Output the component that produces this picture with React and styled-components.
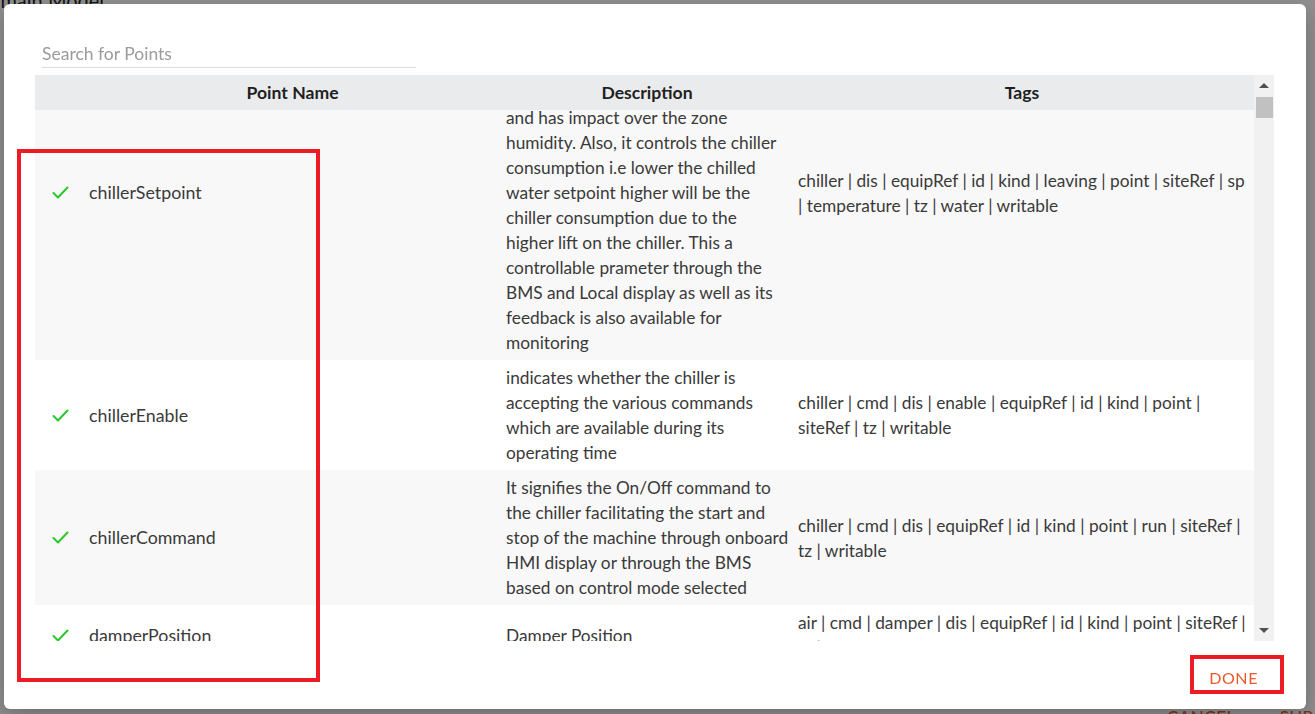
import React, { useLayoutEffect, useRef } from 'react';
import styled, { createGlobalStyle } from 'styled-components';

const GlobalStyle = createGlobalStyle`
  html, body {
    margin: 0;
    height: 100%;
    overflow: hidden;
  }
  body {
    font-family: Lato, 'Open Sans', sans-serif;
    background: #fff;
    color: #333;
  }
`;

const points = [
  {
    name: 'chillerSetpoint',
    description:
      'It is the leaving chilled water temperature setpoint which decides the supply air temperature\nand has impact over the zone humidity. Also, it controls the chiller consumption i.e lower the chilled water setpoint higher will be the chiller consumption due to the higher lift on the chiller. This a controllable prameter through the BMS and Local display as well as its feedback is also available for monitoring',
    tags: 'chiller | dis | equipRef | id | kind | leaving | point | siteRef | sp | temperature | tz | water | writable',
  },
  {
    name: 'chillerEnable',
    description:
      'indicates whether the chiller is accepting the various commands which are available during its operating time',
    tags: 'chiller | cmd | dis | enable | equipRef | id | kind | point | siteRef | tz | writable',
  },
  {
    name: 'chillerCommand',
    description:
      'It signifies the On/Off command to the chiller facilitating the start and stop of the machine through onboard HMI display or through the BMS based on control mode selected',
    tags: 'chiller | cmd | dis | equipRef | id | kind | point | run | siteRef | tz | writable',
  },
  {
    name: 'damperPosition',
    description: 'Damper Position',
    tags: 'air | cmd | damper | dis | equipRef | id | kind | point | siteRef | tz | writable',
  },
  {
    name: 'supplyAirTemp',
    description: 'Supply Air Temperature',
    tags: 'air | discharge | dis | equipRef | id | kind | point | sensor | siteRef | temp | tz',
  },
];

const COLUMNS = '46px 423px 286px 1fr';

// page sitting under the dialog
const Page = styled.div`
  height: 100vh;
  display: flex;
  flex-direction: column;
  justify-content: space-between;
`;

const PageTitle = styled.h2`
  margin: -12px 0 0 -26px;
  font-size: 20px;
  font-weight: 400;
  color: #222;
`;

const PageFooter = styled.div`
  display: flex;
  gap: 44px;
  padding-left: 1167px;
  margin-bottom: -14px;
`;

const PageButton = styled.span`
  font-size: 17px;
  color: #e8582b;
  letter-spacing: 0.5px;
`;

const Overlay = styled.div`
  position: fixed;
  inset: 0;
  display: flex;
  padding: 4px 9px 5px 4px;
  background: rgba(0, 0, 0, 0.44);
`;

const Dialog = styled.div`
  flex: 1;
  display: flex;
  flex-direction: column;
  padding: 32px 32px 0 31px;
  background: #fff;
  border-radius: 6px;
  box-shadow: 0 8px 24px rgba(0, 0, 0, 0.25);
`;

const SearchInput = styled.input`
  width: 374px;
  height: 28px;
  margin: 0 0 7px 7px;
  padding: 3px 0 0;
  border: none;
  border-bottom: 1px solid #dcdcdc;
  outline: none;
  background: transparent;
  font-family: Lato, 'Open Sans', sans-serif;
  font-size: 17.5px;
  color: #333;

  &::placeholder {
    color: #9b9b9b;
  }
`;

const TableFrame = styled.div`
  display: flex;
  height: 566px;
`;

const TableMain = styled.div`
  flex: 1;
  min-width: 0;
  display: flex;
  flex-direction: column;
`;

const HeaderRow = styled.div`
  display: grid;
  grid-template-columns: ${COLUMNS};
  align-items: center;
  height: 35px;
  flex-shrink: 0;
  background: #eaebed;
`;

const HeaderCell = styled.div`
  text-align: center;
  font-size: 17.6px;
  font-weight: 700;
  color: #1f1f1f;
`;

const Body = styled.div`
  flex: 1;
  overflow: hidden;
`;

const Row = styled.div`
  display: grid;
  grid-template-columns: ${COLUMNS};
  align-items: center;
  background: ${(p) => (p.$shade ? '#f8f8f8' : '#fff')};
`;

const Cell = styled.div`
  padding: ${(p) => p.$pad || '5px 8px'};
  font-size: ${(p) => p.$size || '17.3px'};
  line-height: 25px;
  color: #3a3a3a;
  white-space: pre-line;
`;

const CheckCell = styled.div`
  display: flex;
  padding-left: 17px;
`;

const Scrollbar = styled.div`
  width: 20px;
  display: flex;
  flex-direction: column;
  align-items: center;
  background: #f1f1f1;
`;

const ArrowBox = styled.div`
  height: 21px;
  display: flex;
  align-items: center;
  justify-content: center;
`;

const Arrow = styled.span`
  width: 0;
  height: 0;
  border-left: 5px solid transparent;
  border-right: 5px solid transparent;
  ${(p) => (p.$down ? 'border-top' : 'border-bottom')}: 5px solid #505050;
`;

const Track = styled.div`
  flex: 1;
  padding-top: 1px;
`;

const Thumb = styled.div`
  width: 17px;
  height: 21px;
  background: #c1c1c1;
`;

const Footer = styled.div`
  height: 68px;
  padding-top: 5px;
  box-sizing: border-box;
  display: flex;
  justify-content: flex-end;
  align-items: center;
`;

const DoneButton = styled.button`
  border: none;
  background: none;
  padding: 6px 16px;
  font-family: Lato, 'Open Sans', sans-serif;
  font-size: 16px;
  letter-spacing: 0.6px;
  color: #e8582b;
  cursor: pointer;
`;

// red review markers drawn over the screenshot
const Marker = styled.div`
  position: absolute;
  box-sizing: border-box;
  border: 4px solid #ed1c24;
  pointer-events: none;
`;

const Check = () => (
  <svg width="17" height="13" viewBox="0 0 17 13">
    <polyline
      points="1.5,7 6,11.5 15.5,1.5"
      fill="none"
      stroke="#27c92a"
      strokeWidth="2"
      strokeLinecap="round"
      strokeLinejoin="round"
    />
  </svg>
);

export default function App() {
  const bodyRef = useRef(null);

  useLayoutEffect(() => {
    if (bodyRef.current) bodyRef.current.scrollTop = 85;
  }, []);

  return (
    <>
      <GlobalStyle />
      <Page>
        <PageTitle>Domain Model</PageTitle>
        <PageFooter>
          <PageButton>CANCEL</PageButton>
          <PageButton>SUBMIT</PageButton>
        </PageFooter>
      </Page>
      <Overlay>
        <Dialog>
          <SearchInput placeholder="Search for Points" />
          <TableFrame>
            <TableMain>
              <HeaderRow>
                <HeaderCell />
                <HeaderCell>Point Name</HeaderCell>
                <HeaderCell>Description</HeaderCell>
                <HeaderCell>Tags</HeaderCell>
              </HeaderRow>
              <Body ref={bodyRef}>
                {points.map((pt, i) => (
                  <Row key={pt.name} $shade={i % 2 === 0}>
                    <CheckCell>
                      <Check />
                    </CheckCell>
                    <Cell $size="17.8px">{pt.name}</Cell>
                    <Cell $pad="5px 1.5px 5px 2px">{pt.description}</Cell>
                    <Cell $pad="5px 4px 5px 8px">{pt.tags}</Cell>
                  </Row>
                ))}
              </Body>
            </TableMain>
            <Scrollbar>
              <ArrowBox>
                <Arrow />
              </ArrowBox>
              <Track>
                <Thumb />
              </Track>
              <ArrowBox>
                <Arrow $down />
              </ArrowBox>
            </Scrollbar>
          </TableFrame>
          <Footer>
            <DoneButton>DONE</DoneButton>
          </Footer>
        </Dialog>
        <Marker style={{ left: 17, top: 149, width: 303, height: 533 }} />
        <Marker style={{ left: 1190, top: 655, width: 94, height: 39 }} />
      </Overlay>
    </>
  );
}
